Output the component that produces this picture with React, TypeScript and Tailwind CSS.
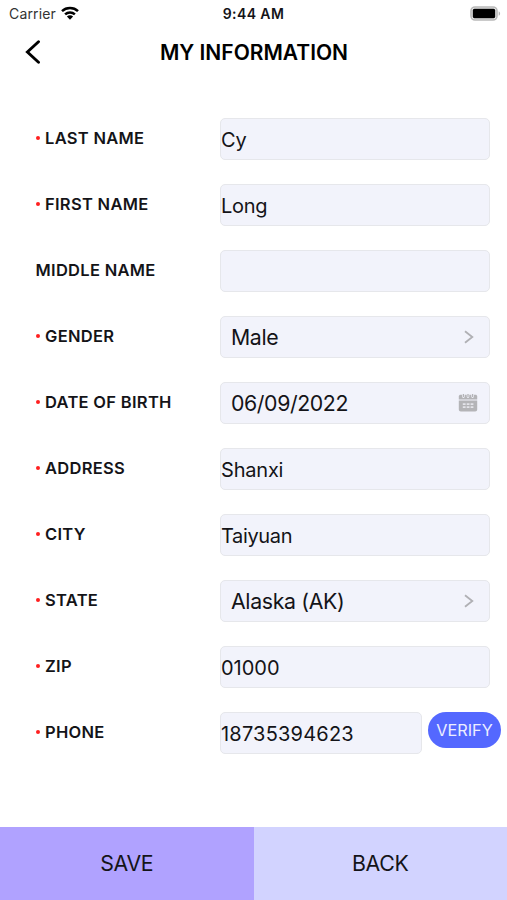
import React from 'react';

interface Field {
    label: string;
    value: string;
    required?: boolean;
    kind?: 'text' | 'select' | 'date' | 'phone';
    valueClass: string;
}

const FIELDS: Field[] = [
    { label: 'LAST NAME', value: 'Cy', required: true, valueClass: 'text-[20px] pt-px' },
    { label: 'FIRST NAME', value: 'Long', required: true, valueClass: 'text-[20px] tracking-[-0.3px] pt-px' },
    { label: 'MIDDLE NAME', value: '', valueClass: 'text-[20px]' },
    { label: 'GENDER', value: 'Male', required: true, kind: 'select', valueClass: 'text-[21.3px] tracking-[-0.4px] pt-0.5' },
    { label: 'DATE OF BIRTH', value: '06/09/2022', required: true, kind: 'date', valueClass: 'text-[21.3px] tracking-[-0.4px] pt-0.5' },
    { label: 'ADDRESS', value: 'Shanxi', required: true, valueClass: 'text-[20px] tracking-[-0.2px] pt-px' },
    { label: 'CITY', value: 'Taiyuan', required: true, valueClass: 'text-[20px] tracking-[-0.35px] pt-px' },
    { label: 'STATE', value: 'Alaska (AK)', required: true, kind: 'select', valueClass: 'text-[21.3px] tracking-[-0.35px] pt-0.5' },
    { label: 'ZIP', value: '01000', required: true, valueClass: 'text-[20px] pt-px' },
    { label: 'PHONE', value: '18735394623', required: true, kind: 'phone', valueClass: 'text-[20px] tracking-[0.2px] pt-px' },
];

const WifiIcon: React.FC<{ className: string }> = ({ className }) => (
    <svg className={className} viewBox="0 0 18 14" fill="none" stroke="currentColor" strokeWidth="2.5">
        <path d="M1 5.2C5.4 1 12.6 1 17 5.2" />
        <path d="M4.1 8.4C6.9 5.8 11.1 5.8 13.9 8.4" />
        <path d="M9 13.8L5.9 10.5C7.6 8.9 10.4 8.9 12.1 10.5Z" fill="currentColor" stroke="none" />
    </svg>
);

const BatteryIcon: React.FC<{ className: string }> = ({ className }) => (
    <svg className={className} viewBox="0 0 31 15">
        <rect x="1" y="1" width="26" height="13" rx="4" fill="#e9e9e9" stroke="#b9b9b9" strokeWidth="1.6" />
        <rect x="2.8" y="2.8" width="22.4" height="9.4" rx="1.6" fill="#000" />
        <path d="M28.7 5.2C30.6 6 30.6 9 28.7 9.8Z" fill="#b5b5b5" />
    </svg>
);

const BackIcon: React.FC<{ className: string }> = ({ className }) => (
    <svg className={className} viewBox="0 0 16 24" fill="none" stroke="currentColor" strokeWidth="2.9" strokeLinecap="round" strokeLinejoin="miter">
        <path d="M13.5 1.7L2.4 12L13.5 22.3" />
    </svg>
);

const ChevronIcon: React.FC<{ className: string }> = ({ className }) => (
    <svg className={className} viewBox="0 0 10 14" fill="none" stroke="currentColor" strokeWidth="1.8">
        <path d="M1 1.2L8.3 7L1 12.8" />
    </svg>
);

const CalendarIcon: React.FC<{ className: string }> = ({ className }) => (
    <svg className={className} viewBox="0 0 20 18">
        <path d="M0.8 5.6V2.6C0.8 1.4 1.6 0.8 2.6 0.8H17.4C18.4 0.8 19.2 1.4 19.2 2.6V5.6Z" fill="#b4b4b7" />
        <path d="M0.8 6.5H19.2V15.6C19.2 16.9 18.4 17.6 17.2 17.6H2.8C1.6 17.6 0.8 16.9 0.8 15.6Z" fill="#b4b4b7" />
        <path d="M5.4 0V2.6M10 0V2.6M14.6 0V2.6" stroke="#f2f3fb" strokeWidth="2.6" strokeLinecap="round" />
        <path d="M5.4 0V2.4M10 0V2.4M14.6 0V2.4" stroke="#b4b4b7" strokeWidth="1.3" strokeLinecap="round" />
        <path d="M4.8 10.2H15.4M4.8 13.2H15.4" stroke="#e4e4ea" strokeWidth="1.8" strokeDasharray="2.8 1.1" />
    </svg>
);

const FieldRow: React.FC<{ field: Field }> = ({ field }) => {
    const kind = field.kind ?? 'text';
    const padded = kind === 'select' || kind === 'date';

    return (
        <div className="flex h-[42px] items-center">
            <div className="flex w-[185px] shrink-0 items-center pb-0.5 pl-[0.5px] text-[16.5px] leading-6 font-semibold tracking-[0.3px]">
                {field.required && <span className="mr-[5px] size-[4.5px] rounded-full bg-[#ff1f1f]" />}
                <span>{field.label}</span>
            </div>
            <div className={`flex h-full items-center justify-between rounded-[5px] border border-[#e6e7eb] bg-[#f2f3fb] ${kind === 'phone' ? 'w-[202px]' : 'w-[270px]'} ${padded ? 'pr-[11px] pl-2.5' : ''}`}>
                <span className={`whitespace-nowrap ${field.valueClass}`}>{field.value}</span>
                {kind === 'select' && <ChevronIcon className="mr-1 h-3.5 w-2.5 text-[#b0b0b4]" />}
                {kind === 'date' && <CalendarIcon className="h-[18px] w-5" />}
            </div>
            {kind === 'phone' && (
                <button className="mb-1.5 ml-1.5 flex h-9 w-[73px] shrink-0 items-center justify-center rounded-full bg-[#5468ff] text-[16.3px] text-[#eceeff]">
                    VERIFY
                </button>
            )}
        </div>
    );
};

const App: React.FC = () => {
    return (
        <div className="flex h-[900px] w-[507px] flex-col overflow-hidden bg-white font-['Inter','Liberation_Sans',sans-serif] text-[#141418]">
            <div className="grid h-7 grid-cols-3 items-center px-[9px] pb-0.5 text-[14px]">
                <div className="flex items-center gap-[5px] text-[#333]">
                    <span className="tracking-[0.15px]">Carrier</span>
                    <WifiIcon className="h-3.5 w-[18px] text-black" />
                </div>
                <span className="text-center font-semibold tracking-[0.4px]">9:44 AM</span>
                <BatteryIcon className="mr-[-3px] h-[15px] w-[31px] justify-self-end" />
            </div>

            <header className="grid h-12 grid-cols-[1fr_auto_1fr] items-center px-[25px]">
                <BackIcon className="h-6 w-4 text-black" />
                <h1 className="pt-0.5 pl-px text-[21px] font-semibold text-black">MY INFORMATION</h1>
            </header>

            <main className="flex flex-1 flex-col gap-6 pt-[42px] pl-[35px]">
                {FIELDS.map((field) => (
                    <FieldRow key={field.label} field={field} />
                ))}
            </main>

            <footer className="grid h-[73px] grid-cols-2 text-[21.3px] tracking-[-0.3px]">
                <button className="bg-[#b0a2ff]">SAVE</button>
                <button className="bg-[#d2d3ff]">BACK</button>
            </footer>
        </div>
    );
};

export default App;
